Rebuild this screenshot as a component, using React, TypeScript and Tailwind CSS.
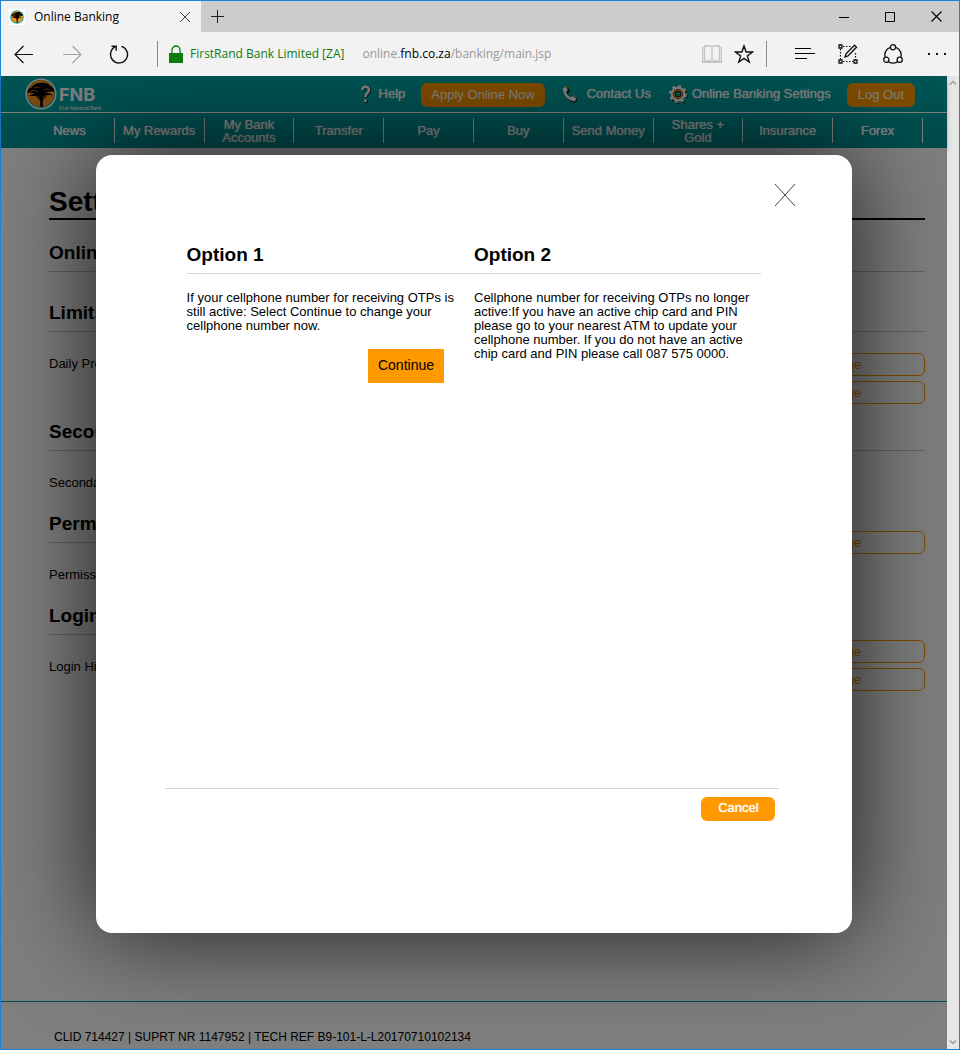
import React from "react";

const NAV = [
  "News",
  "My Rewards",
  "My Bank Accounts",
  "Transfer",
  "Pay",
  "Buy",
  "Send Money",
  "Shares + Gold",
  "Insurance",
  "Forex",
];

function TreeBadge({ className, ring }: { className: string; ring: string }) {
  return (
    <svg viewBox="0 0 32 32" className={className} aria-hidden="true">
      <circle cx="16" cy="16" r="15.500" fill={ring} />
      <circle cx="16" cy="16" r="14" fill="#0aa3a3" />
      <circle cx="16" cy="15.500" r="13.400" fill="#f7941d" />
      <path
        d="M2.500 14.500c0-2.500 2-4.500 4.500-5.500C8.500 6.500 12 4.500 16 5c4-.8 7.500.2 9 2.700 2.500 1.300 4.300 3.300 4.500 6.300-1.800-.9-3.600-1-5.200-.2-1.400-.2-2.800 0-3.900.8 2.800.2 5.200.8 7.400 2.600-3-.4-5.600-.2-8 .5-1.500 1-2 2.300-2.100 3.600-.1 2.500 0 4.800.5 7.200h-3.400c.5-2.500.6-5 .3-7.300-.6-1.800-1.700-3-3.300-3.500-2.300.3-4.700.6-7.300.2 1.600-1.500 3.500-2 5.500-2.200-2.500-.9-4.800-1.200-7.500-1.200z"
        fill="#000"
      />
      <path d="M5 13.200c3-1 6-.6 8.500.6M9 9.800c2-.9 4-.7 5.500.2M18.500 11.800c2-.9 4.500-.8 6.500 0" stroke="#f7941d" strokeWidth=".7" fill="none" />
      <path d="M11.500 18l4 4.500M21 18l-4 4.500" stroke="#000" strokeWidth="1.100" fill="none" />
    </svg>
  );
}

function IconButton({ label, className = "", children }: { label: string; className?: string; children: React.ReactNode }) {
  return (
    <button type="button" aria-label={label} className={`flex shrink-0 items-center justify-center ${className}`}>
      {children}
    </button>
  );
}

function TabStrip() {
  return (
    <div className="flex h-[31px] bg-[#cccccc]">
      <div className="flex w-[200px] items-center bg-[#f2f2f2] pl-2">
        <span className="flex size-4 items-center justify-center bg-white">
          <TreeBadge className="size-[14px]" ring="#0aa3a3" />
        </span>
        <span className="ml-[9px] flex-1 text-[12px] leading-4 text-black">Online Banking</span>
        <IconButton label="Close tab" className="mr-[10px] size-3">
          <svg viewBox="0 0 12 12" className="size-3" stroke="#444" fill="none">
            <path d="M1 1l10 10M11 1L1 11" />
          </svg>
        </IconButton>
      </div>
      <IconButton label="New tab" className="ml-[10px] w-[14px]">
        <svg viewBox="0 0 14 14" className="size-[14px]" stroke="#222" fill="none">
          <path d="M0 6.500h13M6.500 0v13" />
        </svg>
      </IconButton>
      <div className="ml-auto flex items-center gap-9 pr-[17px]">
        <IconButton label="Minimize" className="size-[10px]">
          <svg viewBox="0 0 10 10" className="size-[10px]" stroke="#000" fill="none">
            <path d="M0 5.500h10" />
          </svg>
        </IconButton>
        <IconButton label="Maximize" className="size-[10px]">
          <svg viewBox="0 0 10 10" className="size-[10px]" stroke="#000" fill="none">
            <path d="M.500.500h9v9h-9z" />
          </svg>
        </IconButton>
        <IconButton label="Close window" className="size-[11px]">
          <svg viewBox="0 0 11 11" className="size-[11px]" stroke="#000" strokeWidth="1.100" fill="none">
            <path d="M.500.500l10 10M10.500.500l-10 10" />
          </svg>
        </IconButton>
      </div>
    </div>
  );
}

function Toolbar() {
  return (
    <div className="flex h-11 items-center bg-[#f2f2f2] pr-3 pl-[13px]">
      <IconButton label="Back">
        <svg viewBox="0 0 20 20" className="size-5" stroke="#111" strokeWidth="1.200" fill="none">
          <path d="M19 10.500H1M9.500 2L1 10.500 9.500 19" />
        </svg>
      </IconButton>
      <IconButton label="Forward" className="ml-7">
        <svg viewBox="0 0 20 20" className="size-5" stroke="#a5a5a5" strokeWidth="1.200" fill="none">
          <path d="M1 10.500h18M10.500 2l8.500 8.500-8.500 8.500" />
        </svg>
      </IconButton>
      <IconButton label="Refresh" className="ml-[27px]">
        <svg viewBox="0 0 20 20" className="size-5" stroke="#111" strokeWidth="1.400" fill="none">
          <path d="M12.500 2.300A8.500 8.500 0 1 1 6.500 2.700M2.500 2.200h4.700v4.600" />
        </svg>
      </IconButton>
      <span className="ml-7 h-[26px] w-px bg-[#8a8a8a]" />
      <svg viewBox="0 0 14 18" className="ml-[11px] h-[18px] w-[14px]" aria-hidden="true">
        <path d="M0 8h14v10H0z" fill="#107c10" />
        <path d="M3 8.500V5a4 4 0 0 1 8 0v3.500" fill="none" stroke="#107c10" strokeWidth="1.300" />
      </svg>
      <span className="ml-[7px] shrink-0 text-[12px] leading-4 text-[#107c10]">FirstRand Bank Limited [ZA]</span>
      <span className="ml-[18px] flex-1 text-[12px] leading-4 whitespace-nowrap text-[#999]">
        online.<span className="text-black">fnb.co.za</span>/banking/main.jsp
      </span>
      <IconButton label="Reading view">
        <svg viewBox="0 0 20 18" className="h-[18px] w-5" stroke="#c4c4c4" strokeWidth="1.300" fill="none">
          <path d="M2.500 1h6l1.500 1 1.500-1h6v15h-6L10 17l-1.500-1h-6zM10 2v15M2.500 3H.600v14.400h18.800V3h-1.900" />
        </svg>
      </IconButton>
      <IconButton label="Add to favorites" className="ml-3">
        <svg viewBox="0 0 20 20" className="size-5" stroke="#111" strokeWidth="1.400" fill="none">
          <path d="M10 2l2.100 6h6.300l-5.100 3.900 1.900 6.100L10 14.400 4.800 18l1.900-6.100L1.600 8h6.300z" />
        </svg>
      </IconButton>
      <span className="ml-3 h-[26px] w-px bg-[#8a8a8a]" />
      <IconButton label="Hub" className="ml-7">
        <svg viewBox="0 0 20 12" className="h-3 w-5" stroke="#000" fill="none">
          <path d="M0 .500h16M0 5.500h20M0 10.500h12" />
        </svg>
      </IconButton>
      <IconButton label="Make a web note" className="ml-[23px]">
        <svg viewBox="0 0 20 20" className="size-5" stroke="#111" fill="none">
          <path d="M5 2.500h8M2.500 5v11M5 17.500h10M17.500 9v7" strokeDasharray="1.500 1.500" strokeWidth="1.200" />
          <path d="M1 1h3v3H1zM1 16h3v3H1zM16 16h3v3h-3z" strokeWidth="1.300" />
          <path d="M7 13l1-3.200 8.500-8.500 2 2L10 12z" strokeWidth="1.400" />
        </svg>
      </IconButton>
      <IconButton label="Share" className="ml-[25px]">
        <svg viewBox="0 0 20 20" className="size-5" stroke="#111" strokeWidth="1.300" fill="#f2f2f2">
          <circle cx="10" cy="11" r="8.200" />
          <circle cx="10" cy="3.300" r="2.600" />
          <circle cx="3.300" cy="15.800" r="2.600" />
          <circle cx="16.700" cy="15.800" r="2.600" />
        </svg>
      </IconButton>
      <IconButton label="More actions" className="ml-6">
        <svg viewBox="0 0 20 4" className="h-1 w-5">
          <path d="M1 1h2v2H1zM9 1h2v2H9zM17 1h2v2h-2z" fill="#111" />
        </svg>
      </IconButton>
    </div>
  );
}

function HeaderBar() {
  return (
    <header className="bg-linear-to-b from-[#00aaaa] to-[#009698] text-[13px] text-white shadow-[0_4px_4px_-1px_rgba(0,0,0,0.5)]">
      <div className="box-content flex h-9 items-center border-b border-white pr-8 pl-6">
        <TreeBadge className="size-8" ring="#fff" />
        <div className="ml-0.5 flex flex-col pt-2">
          <span className="font-['Inter',sans-serif] text-[18px] leading-5 font-bold">FNB</span>
          <span className="font-['Roboto',sans-serif] text-[5px] leading-[6px] whitespace-nowrap">
            First National Bank
          </span>
        </div>
        <nav className="ml-auto flex items-center [text-shadow:0_0_1px_currentColor]">
          <a href="#help" className="flex items-center gap-2">
            <svg viewBox="0 0 10 18" className="h-[18px] w-[10px]" fill="none" aria-hidden="true">
              <path d="M2.500 5.500C2.500 1 9 1 9 5.200 9 8.500 5.500 8.500 5.500 12.500M5.500 15v3" stroke="#222" strokeWidth="2.500" />
              <path d="M1.300 5C1.300.600 8 .600 8 4.700 8 8 4.500 8 4.500 12M4.500 14.200v2.800" stroke="#fff" strokeWidth="2.500" />
            </svg>
            Help
          </a>
          <button type="button" className="mt-0.5 ml-4 h-6 rounded-md bg-[#ff9900] px-[10px] text-white">
            Apply Online Now
          </button>
          <a href="#contact" className="ml-[17px] flex items-center gap-2">
            <svg viewBox="0 0 17 17" className="size-[17px]" aria-hidden="true">
              <path d="M2 3l4-1.500 2 4-2 1.700c.6 2 2 3.500 3.700 4.200l2-1.400 4 2.500-1.700 4C8 17.500 1.500 11 2 3z" fill="#222" />
              <path d="M1 2l2.800-1.500 2 3.700-1.700 1.700c.6 2.400 2.800 4.600 5 5.400l1.800-1.200 3.600 2.300-1.500 2.800C7 15.500 .5 9.500 1 2z" fill="#fff" />
              <path d="M2 1.500L4 .600l1.200 2M11 10.200l1.200-.6 2.300 1.600" stroke="#ff9900" fill="none" />
            </svg>
            Contact Us
          </a>
          <a href="#settings" className="ml-[17px] flex items-center gap-1">
            <svg viewBox="0 0 20 20" className="size-5" fill="none" aria-hidden="true">
              <circle cx="11" cy="11" r="7" stroke="#222" strokeWidth="4" strokeDasharray="2.750 2.750" />
              <circle cx="10" cy="10" r="7.600" stroke="#fff" strokeWidth="3" strokeDasharray="2.985 2.985" />
              <circle cx="10" cy="10" r="5.800" stroke="#fff" strokeWidth="3.200" />
              <circle cx="10" cy="10" r="3.600" stroke="#222" strokeWidth="2.600" />
              <circle cx="10" cy="10" r="3.900" stroke="#ff9900" strokeWidth="1.300" />
            </svg>
            Online Banking Settings
          </a>
          <button type="button" className="mt-0.5 ml-4 h-6 rounded-md bg-[#ff9900] px-[11px] text-white">
            Log Out
          </button>
        </nav>
      </div>
      <nav className="flex h-[35px] items-center px-6 [text-shadow:0_0_1px_currentColor]">
        {NAV.map((label) => (
          <a
            key={label}
            href="#section"
            className="flex h-[25px] flex-1 items-center justify-center border-r border-white px-1 text-center leading-[13px]"
          >
            <span className={label.length > 11 ? "w-16" : "whitespace-nowrap"}>{label}</span>
          </a>
        ))}
      </nav>
    </header>
  );
}

function SectionHeading({ children, className = "" }: { children: React.ReactNode; className?: string }) {
  return (
    <h2 className={`border-b border-[#c4c4c4] pb-[9px] text-[19px] leading-[18px] font-bold text-black ${className}`}>
      {children}
    </h2>
  );
}

function ChangeButtons({ count, className }: { count: number; className: string }) {
  return (
    <div className={`flex w-[173px] shrink-0 flex-col gap-[5px] ${className}`}>
      {Array.from({ length: count }, (_, i) => (
        <button
          key={i}
          type="button"
          className="h-[23px] rounded-md border border-[#ff9900] text-[13px] leading-4 text-[#ff9900]"
        >
          Change
        </button>
      ))}
    </div>
  );
}

function SettingsPage() {
  return (
    <main className="flex-1 bg-white pt-10 pr-[22px] pl-12 text-[13px] leading-4 text-black">
      <h1 className="border-b-2 border-black pb-0.5 text-[28px] leading-7 font-bold">Settings</h1>
      <SectionHeading className="mt-6">Online Banking</SectionHeading>
      <SectionHeading className="mt-8">Limits</SectionHeading>
      <div className="flex justify-between">
        <p className="mt-6">Daily Profile Limits</p>
        <ChangeButtons count={2} className="mt-[21px]" />
      </div>
      <SectionHeading className="mt-[19px]">Secondary Users</SectionHeading>
      <p className="mt-6">Secondary Users</p>
      <div className="mt-6 flex gap-6">
        <div className="flex-1">
          <SectionHeading>Permissions</SectionHeading>
          <p className="mt-6">Permissions</p>
        </div>
        <ChangeButtons count={1} className="mt-4" />
      </div>
      <div className="mt-6 flex gap-6">
        <div className="flex-1">
          <SectionHeading>Login Details</SectionHeading>
          <p className="mt-6">Login History</p>
        </div>
        <ChangeButtons count={2} className="mt-[33px]" />
      </div>
    </main>
  );
}

function Option({ title, children }: { title: string; children: React.ReactNode }) {
  return (
    <section className="flex-1">
      <h2 className="border-b border-[#d4d4d4] pb-[9px] text-[19px] leading-[18px] font-bold">{title}</h2>
      <div className="mt-[17px] text-[13px] leading-[14px]">{children}</div>
    </section>
  );
}

function OptionsDialog() {
  return (
    <div className="absolute inset-0 flex flex-col overflow-hidden bg-black/50 px-[10%] pt-[79px] pb-[116px]">
      <div
        role="dialog"
        aria-modal="true"
        aria-label="Change cellphone number"
        className="flex flex-1 flex-col rounded-2xl bg-white text-black shadow-[0_0_100px_rgba(0,0,0,0.77)]"
      >
        <div className="flex justify-end pt-7 pr-14">
          <button type="button" aria-label="Close" className="h-6 w-[22px]">
            <svg viewBox="0 0 22 24" className="h-6 w-[22px]" stroke="#444" fill="none">
              <path d="M1 1l20 22M21 1L1 23" />
            </svg>
          </button>
        </div>
        <div className="mt-[39px] flex flex-1 px-[91px]">
          <Option title="Option 1">
            <p className="pr-4">
              If your cellphone number for receiving OTPs is still active: Select Continue to change your cellphone
              number now.
            </p>
            <div className="mt-4 flex justify-end pr-[30px]">
              <button type="button" className="h-[34px] bg-[#ff9900] px-[10px] pb-0.5 text-[14px]">
                Continue
              </button>
            </div>
          </Option>
          <Option title="Option 2">
            <p className="pr-2">
              Cellphone number for receiving OTPs no longer active:If you have an active chip card and PIN please go to
              your nearest ATM to update your cellphone number. If you do not have an active chip card and PIN please
              call 087 575 0000.
            </p>
          </Option>
        </div>
        <div className="mr-[73px] mb-28 ml-[69px] flex justify-end border-t border-[#d4d4d4] pt-2 pr-1">
          <button
            type="button"
            className="h-6 w-[74px] rounded-md bg-[#ff9900] pb-[3px] text-[13px] leading-4 text-white [text-shadow:0_0_1px_currentColor]"
          >
            Cancel
          </button>
        </div>
      </div>
    </div>
  );
}

export default function App() {
  return (
    <div className="flex min-h-screen flex-col border border-[#1e82d8] font-['Liberation_Sans',sans-serif]">
      <div className="font-['Open_Sans',sans-serif]">
        <TabStrip />
        <Toolbar />
      </div>
      <div className="flex flex-1">
        <div className="relative flex min-w-0 flex-1 flex-col">
          <HeaderBar />
          <SettingsPage />
          <footer className="border-t border-[#009999] bg-white pt-[27px] pb-1 pl-[53px] text-[12px] leading-4 text-black">
            CLID 714427 | SUPRT NR 1147952 | TECH REF B9-101-L-L20170710102134
          </footer>
          <OptionsDialog />
        </div>
        <div className="flex w-3 flex-col items-center justify-between bg-[#e6e6e6] py-1" aria-hidden="true">
          <svg viewBox="0 0 8 5" className="h-[5px] w-2" stroke="#999" strokeWidth="1.400" fill="none">
            <path d="M1 4.500l3-3 3 3" />
          </svg>
          <svg viewBox="0 0 8 5" className="h-[5px] w-2" stroke="#999" strokeWidth="1.400" fill="none">
            <path d="M1 .500l3 3 3-3" />
          </svg>
        </div>
      </div>
    </div>
  );
}
